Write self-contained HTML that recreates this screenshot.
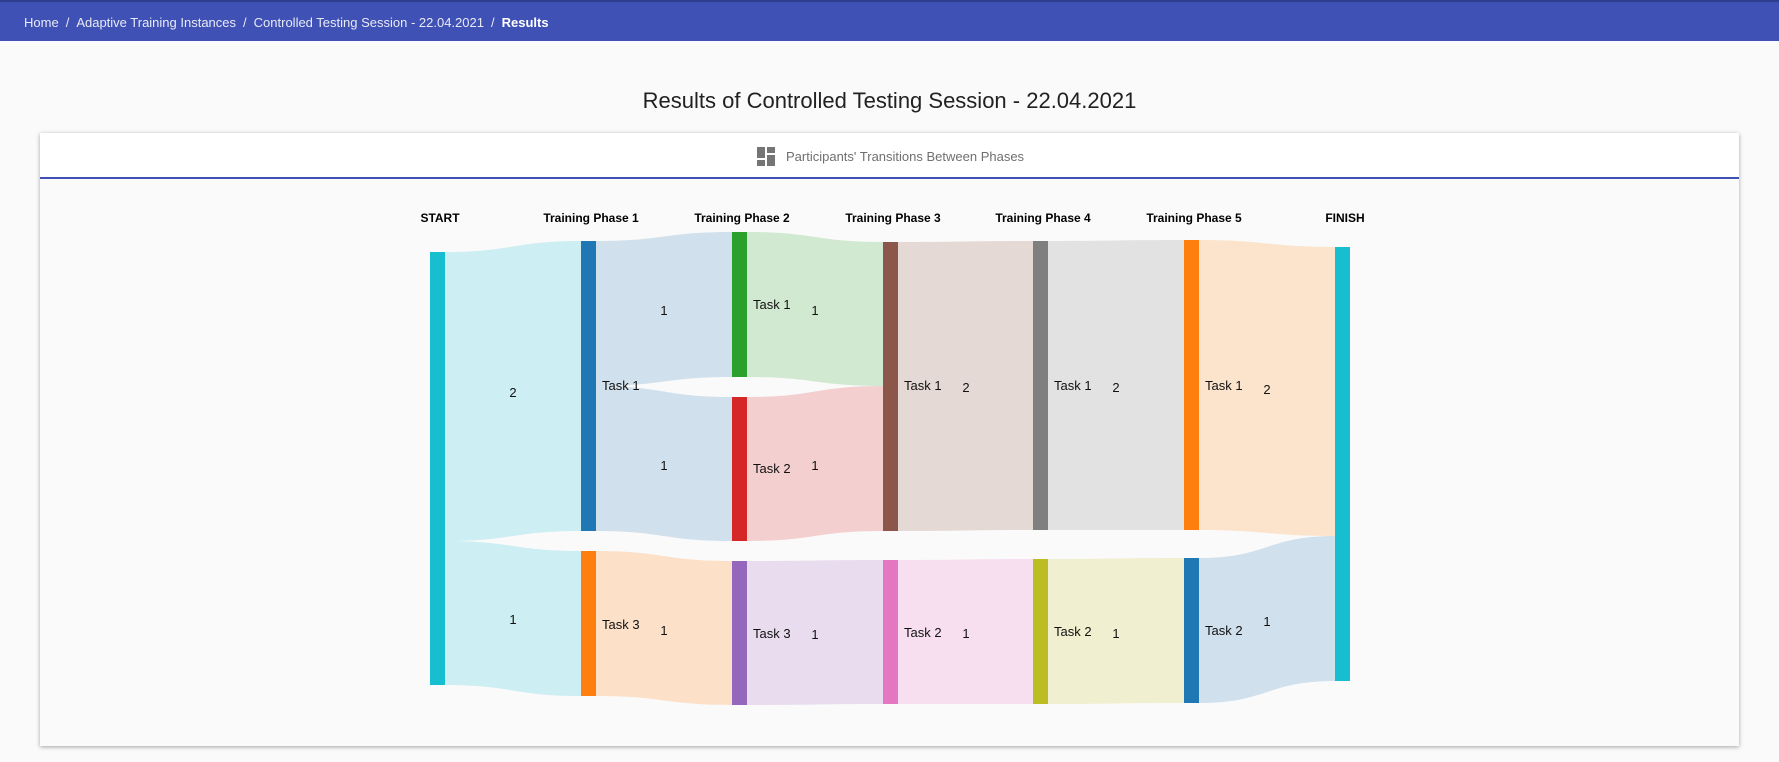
<!DOCTYPE html>
<html><head><meta charset="utf-8"><style>
html,body{margin:0;padding:0;width:1779px;height:762px;background:#fafafa;overflow:hidden;font-family:"Liberation Sans",sans-serif}
.nav{position:absolute;left:0;top:0;width:1779px;height:41px;background:#3f51b5;border-top:2px solid #2f3d8f;box-sizing:border-box}
.bc{position:absolute;left:24px;top:13px;font-size:13px;color:#e8eaf6;white-space:nowrap}
.bc span.s{margin:0 7px}
.bc b{font-weight:bold;color:#fff}
.title{position:absolute;left:0;width:1779px;top:88px;text-align:center;font-size:22px;color:#212121}
.card{position:absolute;left:40px;top:133px;width:1699px;height:613px;background:#fafafa;box-shadow:0 1px 4px rgba(0,0,0,.35)}
.hdr{position:absolute;left:0;top:0;width:100%;height:44px;border-bottom:2px solid #3f51b5;background:#fff}
.ht{position:absolute;left:746px;top:16px;font-size:13px;color:#6f6f6f}
svg{position:absolute;left:0;top:0}
</style></head><body>
<div class="nav"><div class="bc">Home<span class="s">/</span>Adaptive Training Instances<span class="s">/</span>Controlled Testing Session - 22.04.2021<span class="s">/</span><b>Results</b></div></div>
<div class="title">Results of Controlled Testing Session - 22.04.2021</div>
<div class="card"><div class="hdr">
<svg width="20" height="20" style="left:717px;top:14px" viewBox="0 0 20 20"><rect x="0" y="0" width="8" height="11" fill="#757575"/><rect x="10" y="0" width="8" height="6" fill="#757575"/><rect x="0" y="13" width="8" height="6" fill="#757575"/><rect x="10" y="8" width="8" height="11" fill="#757575"/></svg>
<div class="ht">Participants' Transitions Between Phases</div></div></div>
<svg width="1779" height="762" viewBox="0 0 1779 762" font-family="Liberation Sans, sans-serif">
<g>
<path d="M445 252C513 252 513 241 581 241L581 531C513 531 513 541 445 541Z" fill="#cdeef2"/>
<path d="M445 541C513 541 513 551 581 551L581 696C513 696 513 685 445 685Z" fill="#cdeef2"/>
<path d="M596 241C664 241 664 232 732 232L732 377C664 377 664 386 596 386Z" fill="#d0e0ec"/>
<path d="M596 386C664 386 664 397 732 397L732 541C664 541 664 531 596 531Z" fill="#d0e0ec"/>
<path d="M596 551C664 551 664 561 732 561L732 705C664 705 664 696 596 696Z" fill="#fce0c8"/>
<path d="M747 232C815 232 815 242 883 242L883 386C815 386 815 377 747 377Z" fill="#d2e9d1"/>
<path d="M747 397C815 397 815 386 883 386L883 531C815 531 815 541 747 541Z" fill="#f4cfd0"/>
<path d="M747 561C815 561 815 560 883 560L883 704C815 704 815 705 747 705Z" fill="#e8dcee"/>
<path d="M898 242C966 242 966 241 1033 241L1033 530C966 530 966 531 898 531Z" fill="#e5d9d6"/>
<path d="M898 560C966 560 966 559 1033 559L1033 704C966 704 966 704 898 704Z" fill="#f7dff0"/>
<path d="M1048 241C1116 241 1116 240 1184 240L1184 530C1116 530 1116 530 1048 530Z" fill="#e2e2e2"/>
<path d="M1048 559C1116 559 1116 558 1184 558L1184 703C1116 703 1116 704 1048 704Z" fill="#f0efd0"/>
<path d="M1199 240C1267 240 1267 247 1335 247L1335 536C1267 536 1267 530 1199 530Z" fill="#fce3cc"/>
<path d="M1199 558C1267 558 1267 536 1335 536L1335 681C1267 681 1267 703 1199 703Z" fill="#d0e0ec"/>
</g>
<rect x="430" y="252" width="15" height="433" fill="#17becf"/>
<rect x="581" y="241" width="15" height="290" fill="#1f77b4"/>
<rect x="581" y="551" width="15" height="145" fill="#ff7f0e"/>
<rect x="732" y="232" width="15" height="145" fill="#2ca02c"/>
<rect x="732" y="397" width="15" height="144" fill="#d62728"/>
<rect x="732" y="561" width="15" height="144" fill="#9467bd"/>
<rect x="883" y="242" width="15" height="289" fill="#8c564b"/>
<rect x="883" y="560" width="15" height="144" fill="#e377c2"/>
<rect x="1033" y="241" width="15" height="289" fill="#7f7f7f"/>
<rect x="1033" y="559" width="15" height="145" fill="#bcbd22"/>
<rect x="1184" y="240" width="15" height="290" fill="#ff7f0e"/>
<rect x="1184" y="558" width="15" height="145" fill="#1f77b4"/>
<rect x="1335" y="247" width="15" height="434" fill="#17becf"/>
<g font-size="12" font-weight="bold" fill="#000" text-anchor="middle">
<text x="440" y="222">START</text><text x="591" y="222">Training Phase 1</text><text x="742" y="222">Training Phase 2</text><text x="893" y="222">Training Phase 3</text><text x="1043" y="222">Training Phase 4</text><text x="1194" y="222">Training Phase 5</text><text x="1345" y="222">FINISH</text>
</g>
<g font-size="13" fill="#111">
<text x="602" y="390">Task 1</text><text x="602" y="629">Task 3</text>
<text x="753" y="309">Task 1</text><text x="753" y="473">Task 2</text><text x="753" y="638">Task 3</text>
<text x="904" y="390">Task 1</text><text x="904" y="637">Task 2</text>
<text x="1054" y="390">Task 1</text><text x="1054" y="636">Task 2</text>
<text x="1205" y="390">Task 1</text><text x="1205" y="635">Task 2</text>
</g>
<g font-size="13" fill="#111" text-anchor="middle">
<text x="513" y="397">2</text><text x="513" y="624">1</text>
<text x="664" y="315">1</text><text x="664" y="470">1</text><text x="664" y="635">1</text>
<text x="815" y="315">1</text><text x="815" y="470">1</text><text x="815" y="639">1</text>
<text x="966" y="392">2</text><text x="966" y="638">1</text>
<text x="1116" y="392">2</text><text x="1116" y="638">1</text>
<text x="1267" y="394">2</text><text x="1267" y="626">1</text>
</g>
</svg>
</body></html>
